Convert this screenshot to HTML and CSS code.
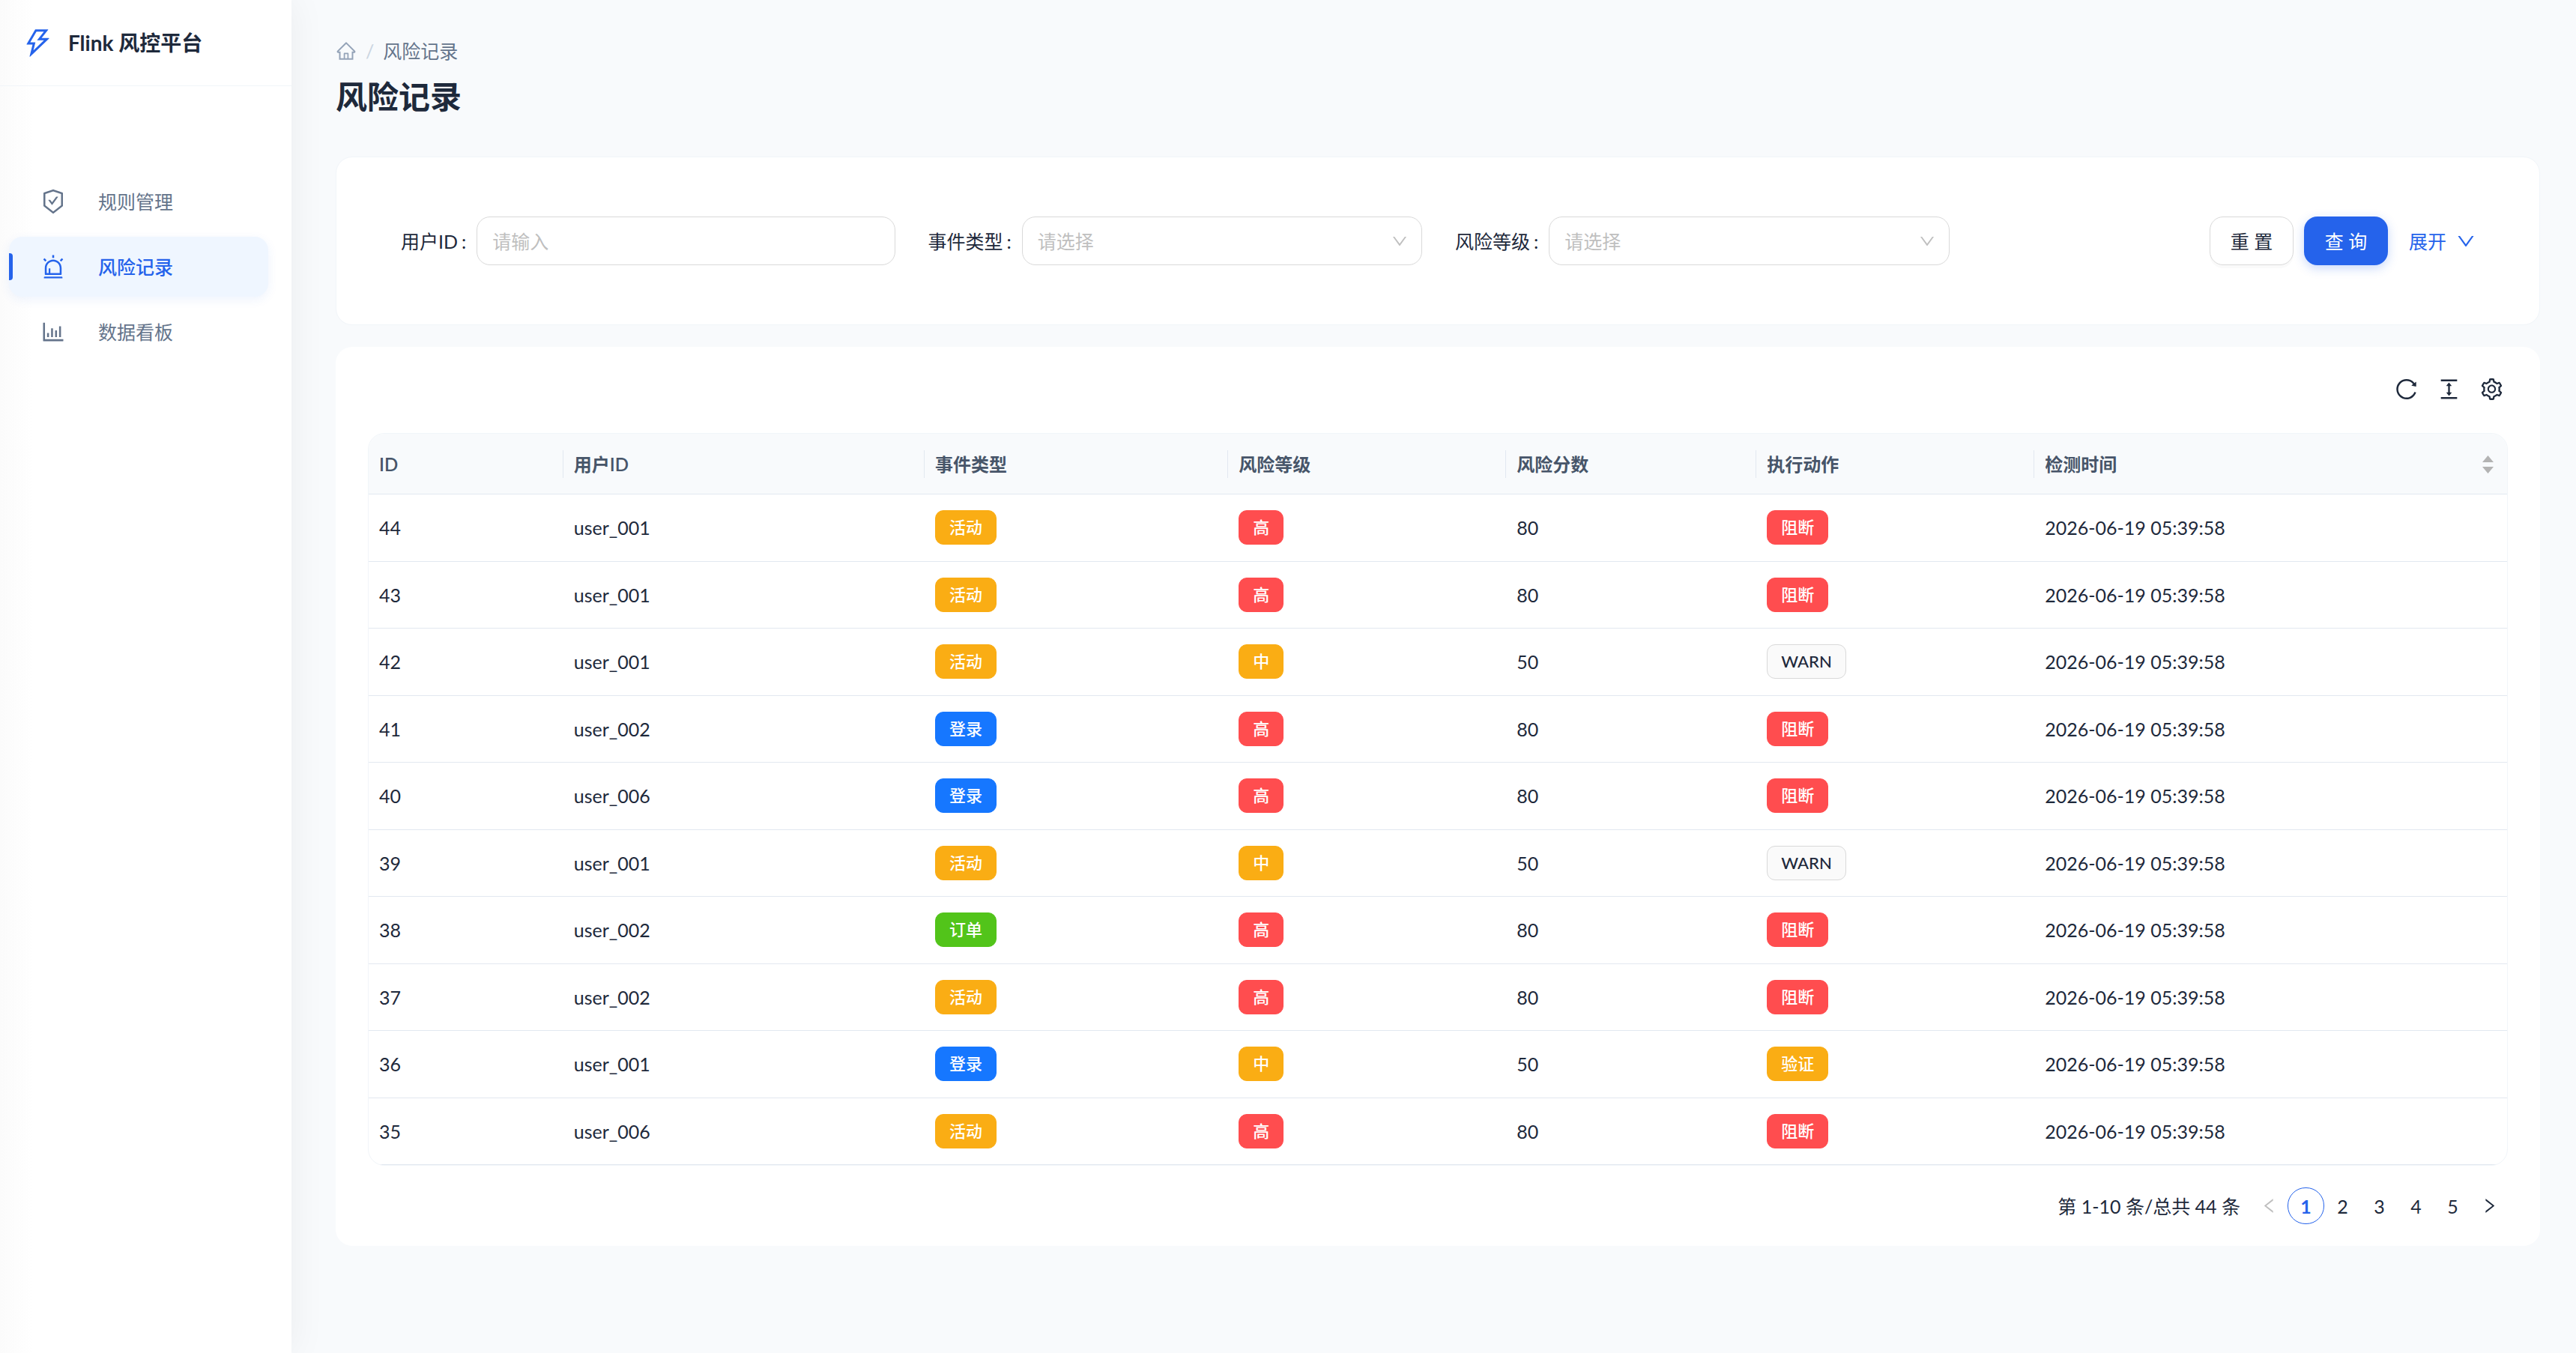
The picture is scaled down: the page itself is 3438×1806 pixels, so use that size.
FILE: index.html
```html
<!DOCTYPE html>
<html lang="zh-CN">
  <head>
    <meta charset="UTF-8" />
    <meta name="viewport" content="width=device-width, initial-scale=1.0" />
    <title>风险记录 - Flink 风控平台</title>
    <link rel="stylesheet" href="styles.css">
  </head>
  <body>
    <!-- shared icons -->
    <svg class="sprite" aria-hidden="true">
      <symbol id="icon-down" viewBox="0 0 1024 1024">
        <path d="M884 256h-75c-5.1 0-9.9 2.5-12.9 6.6L512 654.2 227.9 262.6c-3-4.1-7.8-6.6-12.9-6.6h-75c-6.5 0-10.3 7.4-6.5 12.7l352.6 486.1c12.8 17.6 39 17.6 51.7 0l352.6-486.1c3.9-5.3.1-12.7-6.4-12.7z" />
      </symbol>
    </svg>

    <div class="layout">
      <!-- sidebar -->
      <aside class="sider">
        <a class="logo" href="#">
          <svg class="logo-icon" viewBox="0 0 1024 1024"><path d="M848 359.3H627.7L825.8 109c4.1-5.3.4-13-6.3-13H436c-2.8 0-5.5 1.5-6.9 4L170 547.5c-3.1 5.3.7 12 6.9 12h174.4l-89.4 357.6c-1.9 7.8 7.5 13.3 13.3 7.7L853.5 373c5.2-4.9 1.7-13.7-5.5-13.7zM378.2 732.5l60.3-241H281.1l189.6-327.4h224.6L487 427.4h211L378.2 732.5z" /></svg>
          <span>Flink 风控平台</span>
        </a>
        <nav class="menu">
          <a class="menu-item" href="#rules">
            <svg viewBox="0 0 1024 1024"><path d="M866.9 169.9L527.1 54.1C523 52.7 517.5 52 512 52s-11 .7-15.1 2.1L157.1 169.9c-8.3 2.8-15.1 12.4-15.1 21.2v482.4c0 8.8 5.7 20.4 12.6 25.9L499.3 968c3.5 2.7 8 4.1 12.6 4.1s9.2-1.4 12.6-4.1l344.7-268.6c6.9-5.4 12.6-17 12.6-25.9V191.1c.2-8.8-6.6-18.3-14.9-21.2zM810 654.3L512 886.5 214 654.3V226.7l298-101.6 298 101.6v427.6zm-405.8-201c-3-4.1-7.8-6.6-13-6.6H336c-6.5 0-10.3 7.4-6.5 12.7l126.4 174a16.1 16.1 0 0026 0l212.6-292.7c3.8-5.3 0-12.7-6.5-12.7h-55.2c-5.1 0-10 2.5-13 6.6L468.9 542.4l-64.7-89.1z" /></svg>
            <span>规则管理</span>
          </a>
          <a class="menu-item active" href="#records">
            <svg viewBox="0 0 1024 1024"><path d="M193 796c0 17.7 14.3 32 32 32h574c17.7 0 32-14.3 32-32V563c0-176.2-142.8-319-319-319S193 386.8 193 563v233zm72-233c0-136.4 110.6-247 247-247s247 110.6 247 247v193H404V585c0-5.5-4.5-10-10-10h-44c-5.5 0-10 4.5-10 10v171h-75V563zm-48.1-252.5l39.6-39.6c3.1-3.1 3.1-8.2 0-11.3l-67.9-67.9a8.03 8.03 0 00-11.3 0l-39.6 39.6a8.03 8.03 0 000 11.3l67.9 67.9c3.1 3.1 8.1 3.1 11.3 0zm669.6-79.2l-39.6-39.6a8.03 8.03 0 00-11.3 0l-67.9 67.9a8.03 8.03 0 000 11.3l39.6 39.6c3.1 3.1 8.2 3.1 11.3 0l67.9-67.9c3.1-3.2 3.1-8.2 0-11.3zM832 892H192c-17.7 0-32 14.3-32 32v24c0 4.4 3.6 8 8 8h688c4.4 0 8-3.6 8-8v-24c0-17.7-14.3-32-32-32zM484 180h56c4.4 0 8-3.6 8-8V76c0-4.4-3.6-8-8-8h-56c-4.4 0-8 3.6-8 8v96c0 4.4 3.6 8 8 8z" /></svg>
            <span>风险记录</span>
          </a>
          <a class="menu-item" href="#dashboard">
            <svg viewBox="0 0 1024 1024"><path d="M888 792H200V168c0-4.4-3.6-8-8-8h-56c-4.4 0-8 3.6-8 8v688c0 4.4 3.6 8 8 8h752c4.4 0 8-3.6 8-8v-56c0-4.4-3.6-8-8-8zm-600-80h56c4.4 0 8-3.6 8-8V560c0-4.4-3.6-8-8-8h-56c-4.4 0-8 3.6-8 8v144c0 4.4 3.6 8 8 8zm152 0h56c4.4 0 8-3.6 8-8V384c0-4.4-3.6-8-8-8h-56c-4.4 0-8 3.6-8 8v320c0 4.4 3.6 8 8 8zm152 0h56c4.4 0 8-3.6 8-8V462c0-4.4-3.6-8-8-8h-56c-4.4 0-8 3.6-8 8v242c0 4.4 3.6 8 8 8zm152 0h56c4.4 0 8-3.6 8-8V304c0-4.4-3.6-8-8-8h-56c-4.4 0-8 3.6-8 8v400c0 4.4 3.6 8 8 8z" /></svg>
            <span>数据看板</span>
          </a>
        </nav>
      </aside>

      <!-- content -->
      <main class="content">
        <nav class="breadcrumb">
          <a class="home" href="#" aria-label="首页">
            <svg viewBox="0 0 1024 1024"><path d="M946.5 505L560.1 118.8l-25.9-25.9a31.5 31.5 0 00-44.4 0L77.5 505a63.9 63.9 0 00-18.8 46c.4 35.2 29.7 63.3 64.9 63.3h42.5V940h691.8V614.3h43.4c17.1 0 33.2-6.7 45.3-18.8a63.6 63.6 0 0018.7-45.3c0-17-6.7-33.1-18.8-45.2zM568 868H456V664h112v204zm217.9-325.7V868H632V640c0-22.1-17.9-40-40-40H432c-22.1 0-40 17.9-40 40v228H238.1V542.3h-96l370-369.7 23.1 23.1L882 542.3h-96.1z" /></svg>
          </a>
          <span class="separator">/</span>
          <span>风险记录</span>
        </nav>
        <h1>风险记录</h1>

        <!-- search form -->
        <form class="card search">
          <div class="field">
            <label for="userId">用户ID</label>
            <input type="text" id="userId" placeholder="请输入" />
          </div>
          <div class="field">
            <label for="eventType">事件类型</label>
            <div class="select">
              <select id="eventType">
                <option value="" selected>请选择</option>
                <option>登录</option>
                <option>订单</option>
                <option>活动</option>
              </select>
              <svg><use href="#icon-down" /></svg>
            </div>
          </div>
          <div class="field">
            <label for="riskLevel">风险等级</label>
            <div class="select">
              <select id="riskLevel">
                <option value="" selected>请选择</option>
                <option>高</option>
                <option>中</option>
                <option>低</option>
              </select>
              <svg><use href="#icon-down" /></svg>
            </div>
          </div>
          <div class="actions">
            <button type="reset" class="btn">重 置</button>
            <button type="button" class="btn btn-primary">查 询</button>
            <a class="expand" href="#more">展开 <svg><use href="#icon-down" /></svg></a>
          </div>
        </form>

        <!-- records -->
        <section class="card records">
          <div class="toolbar">
            <button type="button" aria-label="刷新">
              <svg viewBox="0 0 1024 1024"><path d="M909.1 209.3l-56.4 44.1C775.8 155.1 656.2 92 521.9 92 290 92 102.3 279.5 102 511.5 101.7 743.7 289.8 932 521.9 932c181.3 0 335.8-115 394.6-276.1 1.5-4.2-.7-8.9-4.9-10.3l-56.7-19.5a8 8 0 00-10.1 4.8c-1.8 5-3.8 10-5.9 14.9-17.3 41-42.1 77.8-73.7 109.4A344.77 344.77 0 01655.9 829c-42.3 17.9-87.4 27-133.8 27-46.5 0-91.5-9.1-133.8-27A341.5 341.5 0 01279 755.2a342.16 342.16 0 01-73.7-109.4c-17.9-42.4-27-87.4-27-133.9s9.1-91.5 27-133.9c17.3-41 42.1-77.8 73.7-109.4 31.6-31.6 68.4-56.4 109.3-73.8 42.3-17.9 87.4-27 133.8-27 46.5 0 91.5 9.1 133.8 27a341.5 341.5 0 01109.3 73.8c9.9 9.9 19.2 20.4 27.8 31.4l-60.2 47a8 8 0 003 14.1l175.6 43c5 1.2 9.9-2.6 9.9-7.7l.8-180.9c-.1-6.6-7.8-10.3-13-6.2z" /></svg>
            </button>
            <button type="button" aria-label="密度">
              <svg viewBox="0 0 1024 1024"><path d="M840 836H184c-4.4 0-8 3.6-8 8v60c0 4.4 3.6 8 8 8h656c4.4 0 8-3.6 8-8v-60c0-4.4-3.6-8-8-8zm0-724H184c-4.4 0-8 3.6-8 8v60c0 4.4 3.6 8 8 8h656c4.4 0 8-3.6 8-8v-60c0-4.4-3.6-8-8-8zM610.8 378c6 0 9.4-7 5.7-11.7L515.7 238.7a7.14 7.14 0 00-11.3 0L403.6 366.3a7.23 7.23 0 005.7 11.7H476v268h-62.8c-6 0-9.4 7-5.7 11.7l100.8 127.5c2.9 3.7 8.5 3.7 11.3 0l100.8-127.5c3.7-4.7.4-11.7-5.7-11.7H548V378h62.8z" /></svg>
            </button>
            <button type="button" aria-label="列设置">
              <svg viewBox="0 0 1024 1024"><path d="M924.8 625.7l-65.5-56c3.1-19 4.7-38.4 4.7-57.8s-1.6-38.8-4.7-57.8l65.5-56a32.03 32.03 0 009.3-35.2l-.9-2.6a443.74 443.74 0 00-79.7-137.9l-1.8-2.1a32.12 32.12 0 00-35.1-9.5l-81.3 28.9c-30-24.6-63.5-44-99.7-57.6l-15.7-85a32.05 32.05 0 00-25.8-25.7l-2.7-.5c-52.1-9.4-106.9-9.4-159 0l-2.7.5a32.05 32.05 0 00-25.8 25.7l-15.8 85.4a351.86 351.86 0 00-99 57.4l-81.9-29.1a32 32 0 00-35.1 9.5l-1.8 2.1a446.02 446.02 0 00-79.7 137.9l-.9 2.6c-4.5 12.5-.8 26.5 9.3 35.2l66.3 56.6c-3.1 18.8-4.6 38-4.6 57.1 0 19.2 1.5 38.4 4.6 57.1L99 625.5a32.03 32.03 0 00-9.3 35.2l.9 2.6c18.1 50.4 44.9 96.9 79.7 137.9l1.8 2.1a32.12 32.12 0 0035.1 9.5l81.9-29.1c29.8 24.5 63.1 43.9 99 57.4l15.8 85.4a32.05 32.05 0 0025.8 25.7l2.7.5a449.4 449.4 0 00159 0l2.7-.5a32.05 32.05 0 0025.8-25.7l15.7-85a350 350 0 0099.7-57.6l81.3 28.9a32 32 0 0035.1-9.5l1.8-2.1c34.8-41.1 61.6-87.5 79.7-137.9l.9-2.6c4.5-12.3.8-26.3-9.3-35zM788.3 465.9c2.5 15.1 3.8 30.6 3.8 46.1s-1.3 31-3.8 46.1l-6.6 40.1 74.7 63.9a370.03 370.03 0 01-42.6 73.6L721 702.8l-31.4 25.8c-23.9 19.6-50.5 35-79.3 45.8l-38.1 14.3-17.9 97a377.5 377.5 0 01-85 0l-17.9-97.2-37.8-14.5c-28.5-10.8-55-26.2-78.7-45.7l-31.4-25.9-93.4 33.2c-17-22.9-31.2-47.6-42.6-73.6l75.5-64.5-6.5-40c-2.4-14.9-3.7-30.3-3.7-45.5 0-15.3 1.2-30.6 3.7-45.5l6.5-40-75.5-64.5c11.3-26.1 25.6-50.7 42.6-73.6l93.4 33.2 31.4-25.9c23.7-19.5 50.2-34.9 78.7-45.7l37.9-14.3 17.9-97.2c28.1-3.2 56.8-3.2 85 0l17.9 97 38.1 14.3c28.7 10.8 55.4 26.2 79.3 45.8l31.4 25.8 92.8-32.9c17 22.9 31.2 47.6 42.6 73.6L781.8 426l6.5 39.9zM512 326c-97.2 0-176 78.8-176 176s78.8 176 176 176 176-78.8 176-176-78.8-176-176-176zm79.2 255.2A111.6 111.6 0 01512 614c-29.9 0-58-11.7-79.2-32.8A111.6 111.6 0 01400 502c0-29.9 11.7-58 32.8-79.2C454 401.6 482.1 390 512 390c29.9 0 58 11.6 79.2 32.8A111.6 111.6 0 01624 502c0 29.9-11.7 58-32.8 79.2z" /></svg>
            </button>
          </div>

          <div class="table-wrap">
            <table>
              <colgroup>
                <col class="col-id" />
                <col class="col-user" />
                <col class="col-event" />
                <col class="col-level" />
                <col class="col-score" />
                <col class="col-level" />
                <col />
              </colgroup>
              <thead>
                <tr>
                  <th><span>ID</span></th>
                  <th><span>用户ID</span></th>
                  <th><span>事件类型</span></th>
                  <th><span>风险等级</span></th>
                  <th><span>风险分数</span></th>
                  <th><span>执行动作</span></th>
                  <th>
                    <span class="sortable">检测时间
                      <svg viewBox="0 0 30 48"><path d="M15 0L30 18H0zM0 30h30L15 48z" /></svg>
                    </span>
                  </th>
                </tr>
              </thead>
              <tbody>
                <tr>
                  <td>44</td>
                  <td>user_001</td>
                  <td><span class="tag gold">活动</span></td>
                  <td><span class="tag red">高</span></td>
                  <td>80</td>
                  <td><span class="tag red">阻断</span></td>
                  <td>2026-06-19 05:39:58</td>
                </tr>
                <tr>
                  <td>43</td>
                  <td>user_001</td>
                  <td><span class="tag gold">活动</span></td>
                  <td><span class="tag red">高</span></td>
                  <td>80</td>
                  <td><span class="tag red">阻断</span></td>
                  <td>2026-06-19 05:39:58</td>
                </tr>
                <tr>
                  <td>42</td>
                  <td>user_001</td>
                  <td><span class="tag gold">活动</span></td>
                  <td><span class="tag gold">中</span></td>
                  <td>50</td>
                  <td><span class="tag">WARN</span></td>
                  <td>2026-06-19 05:39:58</td>
                </tr>
                <tr>
                  <td>41</td>
                  <td>user_002</td>
                  <td><span class="tag blue">登录</span></td>
                  <td><span class="tag red">高</span></td>
                  <td>80</td>
                  <td><span class="tag red">阻断</span></td>
                  <td>2026-06-19 05:39:58</td>
                </tr>
                <tr>
                  <td>40</td>
                  <td>user_006</td>
                  <td><span class="tag blue">登录</span></td>
                  <td><span class="tag red">高</span></td>
                  <td>80</td>
                  <td><span class="tag red">阻断</span></td>
                  <td>2026-06-19 05:39:58</td>
                </tr>
                <tr>
                  <td>39</td>
                  <td>user_001</td>
                  <td><span class="tag gold">活动</span></td>
                  <td><span class="tag gold">中</span></td>
                  <td>50</td>
                  <td><span class="tag">WARN</span></td>
                  <td>2026-06-19 05:39:58</td>
                </tr>
                <tr>
                  <td>38</td>
                  <td>user_002</td>
                  <td><span class="tag green">订单</span></td>
                  <td><span class="tag red">高</span></td>
                  <td>80</td>
                  <td><span class="tag red">阻断</span></td>
                  <td>2026-06-19 05:39:58</td>
                </tr>
                <tr>
                  <td>37</td>
                  <td>user_002</td>
                  <td><span class="tag gold">活动</span></td>
                  <td><span class="tag red">高</span></td>
                  <td>80</td>
                  <td><span class="tag red">阻断</span></td>
                  <td>2026-06-19 05:39:58</td>
                </tr>
                <tr>
                  <td>36</td>
                  <td>user_001</td>
                  <td><span class="tag blue">登录</span></td>
                  <td><span class="tag gold">中</span></td>
                  <td>50</td>
                  <td><span class="tag gold">验证</span></td>
                  <td>2026-06-19 05:39:58</td>
                </tr>
                <tr>
                  <td>35</td>
                  <td>user_006</td>
                  <td><span class="tag gold">活动</span></td>
                  <td><span class="tag red">高</span></td>
                  <td>80</td>
                  <td><span class="tag red">阻断</span></td>
                  <td>2026-06-19 05:39:58</td>
                </tr>
              </tbody>
            </table>
          </div>

          <!-- pagination -->
          <nav class="pagination" aria-label="分页">
            <span class="total">第 1-10 条/总共 44 条</span>
            <button type="button" aria-label="上一页" disabled>
              <svg viewBox="0 0 1024 1024"><path d="M724 218.3V141c0-6.7-7.7-10.4-12.9-6.3L260.3 486.8a31.86 31.86 0 000 50.3l450.8 352.1c5.3 4.1 12.9.4 12.9-6.3v-77.3c0-4.9-2.3-9.6-6.1-12.6l-360-281 360-281.1c3.8-3 6.1-7.7 6.1-12.6z" /></svg>
            </button>
            <button type="button" class="current">1</button>
            <button type="button">2</button>
            <button type="button">3</button>
            <button type="button">4</button>
            <button type="button">5</button>
            <button type="button" aria-label="下一页">
              <svg viewBox="0 0 1024 1024"><path d="M765.7 486.8L314.9 134.7A7.97 7.97 0 00302 141v77.3c0 4.9 2.3 9.6 6.1 12.6l360 281.1-360 281.1c-3.9 3-6.1 7.7-6.1 12.6V883c0 6.7 7.7 10.4 12.9 6.3l450.8-352.1a31.96 31.96 0 000-50.4z" /></svg>
            </button>
          </nav>
        </section>
      </main>
    </div>
  </body>
</html>
```

FILE: styles.css
```css
* {
  margin: 0;
  padding: 0;
  box-sizing: border-box;
}

body {
  background: #f8fafc;
  color: #1e293b;
  font-family: Lato, "Noto Sans CJK SC", sans-serif;
  font-size: 25px;
  line-height: 40px;
}

a {
  color: inherit;
  text-decoration: none;
}

svg {
  display: block;
  fill: currentColor;
}

button,
input,
select {
  font: inherit;
  color: inherit;
}

button {
  border: none;
  background: none;
  cursor: pointer;
}

.sprite {
  display: none;
}

.layout {
  display: flex;
  min-height: 100vh;
}

/* ===== sidebar ===== */
.sider {
  flex: none;
  width: 389px;
  background: linear-gradient(to right, #fbfbfb, #fff 44px);
  box-shadow: 4px 0 44px rgba(0, 0, 0, 0.05);
}

.logo {
  display: flex;
  align-items: center;
  gap: 18px;
  height: 115px;
  padding: 0 28px;
  border-bottom: 1px solid #f1f5f9;
  font-size: 28px;
  font-weight: 700;
}

.logo-icon {
  width: 45px;
  height: 45px;
  color: #2563eb;
}

.menu {
  display: flex;
  flex-direction: column;
  gap: 7px;
  padding: 114px 31px 0 12px;
}

.menu-item {
  display: flex;
  align-items: center;
  gap: 42px;
  height: 80px;
  padding: 0 41px;
  border-radius: 18px;
  color: #64748b;
}

.menu-item svg {
  width: 36px;
  height: 36px;
}

.menu-item.active {
  position: relative;
  background: #eff6ff;
  box-shadow: 0 4px 14px rgba(37, 99, 235, 0.08);
  color: #2563eb;
  font-weight: 500;
}

.menu-item.active::before {
  content: "";
  position: absolute;
  left: 0;
  top: 22px;
  width: 5px;
  height: 36px;
  border-radius: 0 4px 4px 0;
  background: #2563eb;
}

/* ===== content ===== */
.content {
  flex: 1;
  min-width: 0;
  padding: 48px 48px 49px 59px;
}

.breadcrumb {
  display: flex;
  align-items: center;
  gap: 12px;
  color: #64748b;
}

.home {
  color: #94a3b8;
}

.home svg {
  width: 28px;
  height: 28px;
}

.separator {
  color: #cbd5e1;
}

h1 {
  margin: 12px 0 51px;
  font-size: 42px;
  line-height: 58px;
  font-weight: 700;
}

.card {
  background: #fff;
  border-radius: 22px;
}

/* ===== search form ===== */
.search {
  display: grid;
  grid-template-columns: repeat(4, 1fr);
  gap: 44px;
  padding: 79px 84px 79px 86px;
  border: 1px solid #f1f5f9;
}

.field {
  display: flex;
  align-items: center;
}

.field label::after {
  content: ":";
  margin: 0 14px 0 5px;
}

.field input,
.field select {
  width: 100%;
  height: 65px;
  padding: 0 20px;
  border: 1px solid #d9d9d9;
  border-radius: 18px;
  background: #fff;
}

.field input {
  flex: 1;
  min-width: 0;
}

.field input::placeholder,
.field select {
  color: #bfbfbf;
}

.select {
  flex: 1;
  display: grid;
  align-items: center;
}

.select select,
.select svg {
  grid-area: 1 / 1;
}

.select select {
  appearance: none;
}

.select svg {
  justify-self: end;
  width: 24px;
  height: 24px;
  margin-right: 18px;
  color: #bfbfbf;
  pointer-events: none;
}

.actions {
  display: flex;
  align-items: center;
  justify-content: flex-end;
  gap: 14px;
}

.btn {
  width: 112px;
  height: 65px;
  border: 1px solid #d9d9d9;
  border-radius: 18px;
  background: #fff;
  box-shadow: 0 4px 0 rgba(0, 0, 0, 0.02);
}

.btn-primary {
  border: none;
  background: #2563eb;
  color: #fff;
  box-shadow: 0 4px 14px rgba(37, 99, 235, 0.25);
}

.expand {
  display: flex;
  align-items: center;
  gap: 12px;
  margin-left: 14px;
  color: #2563eb;
}

.expand svg {
  width: 28px;
  height: 28px;
}

/* ===== records ===== */
.records {
  margin-top: 29px;
  padding: 40px 43px 29px;
}

.toolbar {
  display: flex;
  justify-content: flex-end;
  gap: 24px;
  margin-bottom: 42px;
  padding-right: 5px;
}

.toolbar svg {
  width: 33px;
  height: 33px;
}

.table-wrap {
  overflow: hidden;
  border: 1px solid #f1f5f9;
  border-radius: 22px;
}

table {
  width: 100%;
  table-layout: fixed;
  border-collapse: separate;
  border-spacing: 0;
  line-height: 1.58;
}

.col-id {
  width: 9.1%;
}

.col-user {
  width: 16.9%;
}

.col-event {
  width: 14.2%;
}

.col-level {
  width: 13%;
}

.col-score {
  width: 11.7%;
}

th {
  padding: 22px 0 21px;
  border-bottom: 1px solid #e2e8f0;
  background: #f8fafc;
  color: #475569;
  font-size: 24px;
  font-weight: 600;
  line-height: 37px;
  text-align: left;
}

th span {
  display: block;
  padding-left: 14px;
  border-right: 1px solid #e2e8f0;
}

th .sortable {
  display: flex;
  align-items: center;
  justify-content: space-between;
  padding-right: 18px;
  border-right: none;
}

.sortable svg {
  width: 15px;
  height: 24px;
  color: #b3b3b3;
}

td {
  padding: 25px 14px 24px;
  border-bottom: 1px solid #e2e8f0;
}

.tag {
  display: inline-block;
  margin: -4px 0;
  padding: 0 18px;
  border: 1px solid #d9d9d9;
  border-radius: 11px;
  background: #fafafa;
  font-size: 22px;
  font-weight: 500;
  line-height: 44px;
  vertical-align: top;
}

.tag.gold {
  border-color: #faad14;
  background: #faad14;
  color: #fff;
}

.tag.red {
  border-color: #ff4d4f;
  background: #ff4d4f;
  color: #fff;
}

.tag.blue {
  border-color: #1677ff;
  background: #1677ff;
  color: #fff;
}

.tag.green {
  border-color: #52c41a;
  background: #52c41a;
  color: #fff;
}

/* ===== pagination ===== */
.pagination {
  display: flex;
  align-items: center;
  justify-content: flex-end;
  margin-top: 29px;
}

.total {
  margin-right: 14px;
}

.pagination button {
  display: grid;
  place-items: center;
  width: 49px;
  height: 49px;
  border-radius: 24px;
}

.pagination button:disabled {
  color: #bfbfbf;
}

.pagination .current {
  border: 1px solid #2563eb;
  color: #2563eb;
  font-weight: 700;
}

.pagination svg {
  width: 25px;
  height: 25px;
}
```
